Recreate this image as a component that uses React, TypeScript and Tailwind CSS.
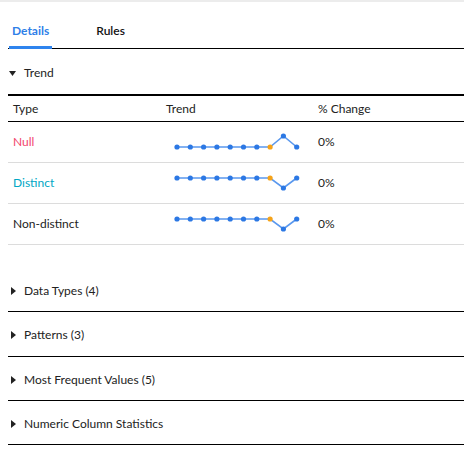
import React from 'react'

type Row = { label: string; color: string; up: boolean }

const rows: Row[] = [
  { label: 'Null', color: 'text-[#f2456d]', up: true },
  { label: 'Distinct', color: 'text-[#00a7c4]', up: false },
  { label: 'Non-distinct', color: 'text-[#222222]', up: false },
]

const sections = ['Data Types (4)', 'Patterns (3)', 'Most Frequent Values (5)', 'Numeric Column Statistics']

function Sparkline({ up }: { up: boolean }) {
  // baseline sits low when the last point peaks, high when it dips
  const base = up ? 13 : 3
  const alt = up ? 2 : 13
  const pts = Array.from({ length: 10 }, (_, i) => ({
    x: 5 + i * 13.3,
    y: i === 8 ? alt : base,
  }))
  const line = pts.map((p) => `${p.x},${p.y}`).join(' ')
  return (
    <svg width="128" height="16" viewBox="0 0 128 16" className="block overflow-visible">
      <polyline points={line} fill="none" stroke="#5a98ee" strokeWidth="1.6" />
      {pts.map((p, i) => (
        <circle key={i} cx={p.x} cy={p.y} r="2.6" fill={i === 7 ? '#f6a318' : '#2c78e4'} />
      ))}
    </svg>
  )
}

function Caret({ open }: { open?: boolean }) {
  return open ? (
    <svg width="7" height="5" viewBox="0 0 7 5" className="block">
      <path d="M0 0h7L3.5 5z" fill="#222" />
    </svg>
  ) : (
    <svg width="5" height="8" viewBox="0 0 5 8" className="block">
      <path d="M0 0l5 4-5 4z" fill="#222" />
    </svg>
  )
}

export default function App() {
  return (
    <div className="w-[464px] border-t-2 border-[#ececec] bg-white text-[12px] leading-4 text-[#222] font-['Lato','Liberation_Sans',sans-serif]">
      <div className="pl-2">
        {/* tabs */}
        <div className="flex h-[47px] items-end border-b border-black">
          <div className="ml-px -mb-px border-b-[3px] border-[#2f84ee] px-[3px] pb-[7px] font-bold text-[#2f7fe8]">
            Details
          </div>
          <div className="ml-[44px] pb-[9px] font-semibold text-[#111]">Rules</div>
        </div>

        {/* trend panel */}
        <div className="pb-[23px]">
          <div className="flex items-center gap-[8px] border-b-2 border-black pl-px pt-[16px] pb-[13px]">
            <Caret open />
            <span>Trend</span>
          </div>
          <div className="grid grid-cols-[158px_152px_1fr] border-b border-black pt-[5px] pb-[4px]">
            <div className="pl-[5px]">Type</div>
            <div>Trend</div>
            <div>% Change</div>
          </div>
          {rows.map((r) => (
            <div
              key={r.label}
              className="grid h-[41px] grid-cols-[158px_152px_1fr] items-center border-b border-[#dcdcdc]"
            >
              <div className={`pl-[5px] ${r.color}`}>{r.label}</div>
              <div className="pl-[6px]">
                <Sparkline up={r.up} />
              </div>
              <div>0%</div>
            </div>
          ))}
        </div>

        {/* collapsed sections */}
        {sections.map((s, i) => (
          <div
            key={s}
            className={`flex items-center gap-[8px] border-b border-black pl-[3px] pt-[15px] ${i === 1 ? 'pb-[13px]' : 'pb-[12px]'}`}
          >
            <Caret />
            <span>{s}</span>
          </div>
        ))}
      </div>
    </div>
  )
}
